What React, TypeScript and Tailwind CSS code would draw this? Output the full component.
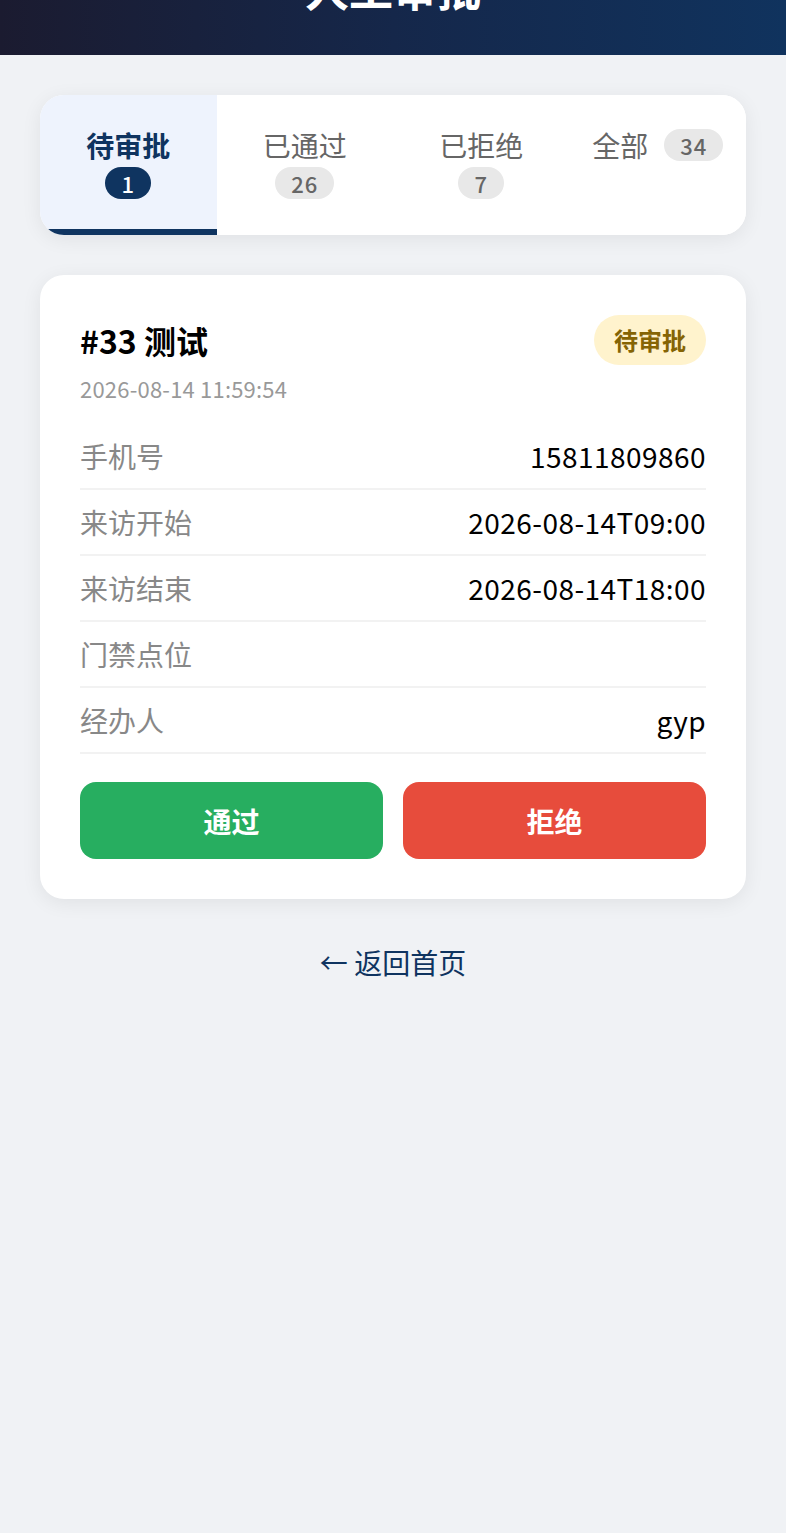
import React from "react";

const font = { fontFamily: '"Noto Sans CJK SC", "Noto Sans", sans-serif' };

const tabs = [
  { label: "待审批", count: 1, active: true },
  { label: "已通过", count: 26 },
  { label: "已拒绝", count: 7 },
  { label: "全部", count: 34 },
];

const rows = [
  { k: "手机号", v: "15811809860" },
  { k: "来访开始", v: "2026-08-14T09:00" },
  { k: "来访结束", v: "2026-08-14T18:00" },
  { k: "门禁点位", v: "" },
  { k: "经办人", v: "gyp" },
];

export default function App() {
  return (
    <div className="min-h-screen bg-[#f0f2f5]" style={font}>
      <header className="h-[55px] overflow-hidden bg-[linear-gradient(90deg,#1b1b30_0%,#15274a_50%,#10335e_100%)]">
        <h1 className="-mt-[34px] text-center text-[44px] leading-[44px] font-bold text-white">
          人工审批
        </h1>
      </header>

      <main className="px-[40px] pt-[40px]">
        <div className="grid grid-cols-4 overflow-hidden rounded-[24px] bg-white shadow-[0_4px_20px_rgba(0,0,0,0.07)]">
          {tabs.map((t) => (
            <div
              key={t.label}
              className={`flex flex-wrap content-start items-center justify-center gap-x-[16px] gap-y-[4px] border-b-[6px] px-[18px] pt-[32px] pb-[30px] ${
                t.active ? "border-[#0f3460] bg-[#eef3fd]" : "border-transparent bg-white"
              }`}
            >
              <span
                className={`text-[28px] leading-[36px] ${
                  t.active ? "font-bold text-[#0f3460]" : "text-[#666666]"
                }`}
              >
                {t.label}
              </span>
              <span
                className={`inline-flex h-[32px] items-center rounded-full px-[16px] text-[22px] font-medium tracking-[1px] ${
                  t.active ? "bg-[#0f3460] text-white" : "bg-[#e8e8e8] text-[#666666]"
                }`}
              >
                {t.count}
              </span>
            </div>
          ))}
        </div>

        <div className="mt-[40px] rounded-[24px] bg-white p-[40px] shadow-[0_4px_20px_rgba(0,0,0,0.07)]">
          <div className="flex items-center justify-between">
            <div className="text-[32px] leading-[50px] font-bold text-black">#33 测试</div>
            <span className="inline-flex h-[50px] items-center rounded-full bg-[#fff3cd] px-[20px] text-[24px] font-bold text-[#856404]">
              待审批
            </span>
          </div>
          <div className="mt-[8px] text-[22px] leading-[30px] tracking-[0.2px] text-[#999999]">2026-08-14 11:59:54</div>

          <div className="mt-[21px]">
            {rows.map((r) => (
              <div
                key={r.k}
                className="flex items-center justify-between border-b-2 border-[#f2f2f2] py-[11px] text-[28px] leading-[42px]"
              >
                <span className="text-[#888888]">{r.k}</span>
                <span className="tracking-[0.45px] text-black">{r.v}</span>
              </div>
            ))}
          </div>

          <div className="mt-[28px] grid grid-cols-2 gap-[20px]">
            <button className="h-[77px] rounded-[16px] bg-[#27ae60] text-[28px] font-bold text-white">通过</button>
            <button className="h-[77px] rounded-[16px] bg-[#e74c3c] text-[28px] font-bold text-white">拒绝</button>
          </div>
        </div>

        <div className="mt-[42px] text-center text-[28px] leading-[42px] text-[#0f3460]">← 返回首页</div>
      </main>
    </div>
  );
}
